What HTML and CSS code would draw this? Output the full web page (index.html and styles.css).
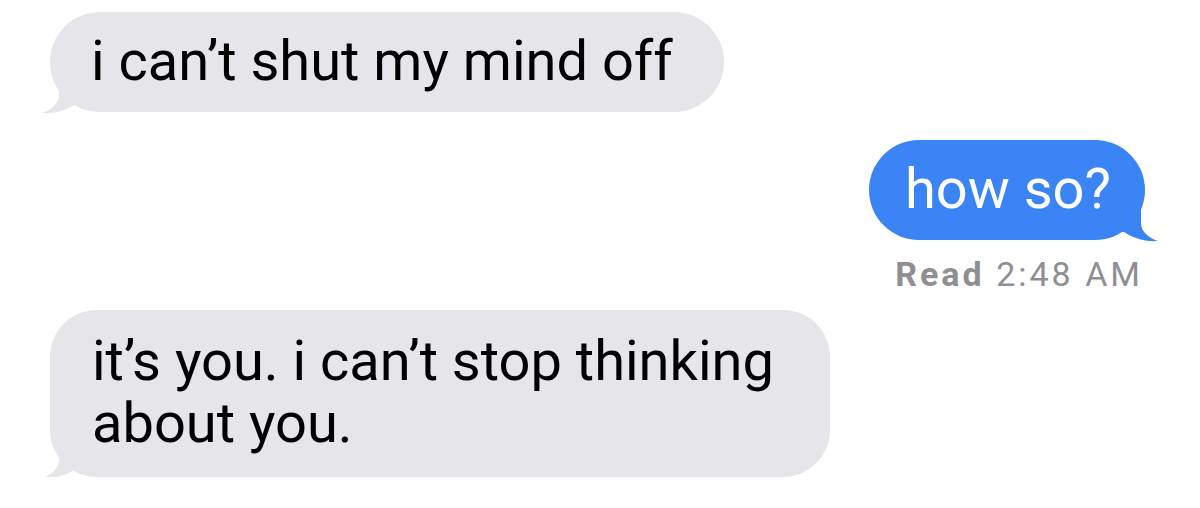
FILE: index.html
```html
<!DOCTYPE html>
<html lang="en">
<head>
  <meta charset="UTF-8">
  <title>Messages</title>
  <link rel="stylesheet" href="styles.css">
</head>
<body>

  <div class="chat">

    <div class="fila recibido">
      <div class="burbuja gris">
        i can’t shut my mind off
        <svg class="cola cola-izq" width="50" height="42" viewBox="0 0 50 42">
          <path d="M18 0 L18 23 C18 32 10 38 1 41 C14 42 26 38 35 32 L50 32 L50 0 Z" fill="#e5e5ea"/>
        </svg>
      </div>
    </div>

    <div class="fila enviado">
      <div class="burbuja azul">
        how so?
        <svg class="cola cola-der" width="50" height="42" viewBox="0 0 50 42">
          <path d="M32 0 L32 23 C32 32 40 38 49 41 C36 42 24 38 15 32 L0 32 L0 0 Z" fill="#3b84f6"/>
        </svg>
      </div>
      <div class="leido"><b>Read</b> 2:48 AM</div>
    </div>

    <div class="fila recibido">
      <div class="burbuja gris doble">
        it’s you. i can’t stop thinking<br>about you.
        <svg class="cola cola-izq" width="50" height="42" viewBox="0 0 50 42">
          <path d="M18 0 L18 23 C18 32 10 38 1 41 C14 42 26 38 35 32 L50 32 L50 0 Z" fill="#e5e5ea"/>
        </svg>
      </div>
    </div>

  </div>

</body>
</html>
```

FILE: styles.css
```css
body {
  margin: 0;
  background-color: #fff;
  font-family: Roboto, "Liberation Sans", sans-serif;
}

.chat {
  display: flex;
  flex-direction: column;
  padding: 12px 55px 0 50px;
}

.fila {
  display: flex;
  flex-direction: column;
}

.recibido {
  align-items: flex-start;
}

.enviado {
  align-items: flex-end;
  margin-top: 28px;
}

.burbuja {
  position: relative;
  border-radius: 50px;
  font-size: 56px;
  line-height: 64px;
  padding: 17px 51px 19px 41px;
}

.gris {
  background-color: #e5e5ea;
  color: #000;
}

.azul {
  background-color: #3b84f6;
  color: #fff;
  padding: 17px 34px 19px 36px;
}

.doble {
  line-height: 62px;
  padding: 20px 56px 23px 42px;
  border-radius: 47px;
}

.cola {
  position: absolute;
  bottom: -2px;
}

.cola-izq {
  left: -9px;
}

.cola-der {
  right: -14px;
}

.leido {
  color: #8e8e93;
  font-size: 34px;
  line-height: 40px;
  letter-spacing: 3px;
  margin-top: 14px;
  margin-right: 2px;
}

.leido b {
  font-weight: bold;
}

.enviado + .fila {
  margin-top: 16px;
}
```
